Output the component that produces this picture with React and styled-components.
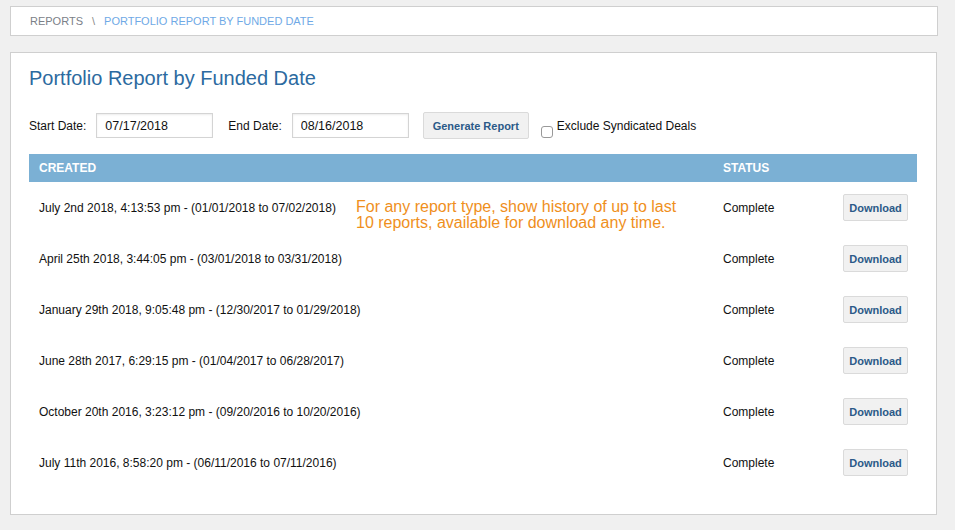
import React from "react";
import styled, { createGlobalStyle } from "styled-components";

const Global = createGlobalStyle`
  html, body { margin: 0; padding: 0; background: #f0f0f0; }
  body { font-family: "Liberation Sans", Arial, Helvetica, sans-serif; color: #222; }
  * { box-sizing: border-box; }
`;

const Page = styled.div`
  display: flex;
  flex-direction: column;
  gap: 16px;
  padding: 6px 17px 0 10px;
  width: 955px;
  height: 530px;
`;

const Crumbs = styled.nav`
  display: flex;
  align-items: center;
  gap: 9px;
  height: 30px;
  padding: 0 19px;
  background: #fff;
  border: 1px solid #cfcfcf;
  font-size: 11px;
  text-transform: uppercase;
`;

const Crumb = styled.span`
  color: ${(p) => (p.$active ? "#6fa9e6" : "#7b8088")};
`;

const Sep = styled.span`
  color: #888;
`;

const Panel = styled.section`
  position: relative;
  width: 927px;
  height: 463px;
  background: #fff;
  border: 1px solid #cfcfcf;
  padding: 12px 19px 0 18px;
`;

const Title = styled.h1`
  margin: 0;
  font-size: 20px;
  line-height: 26px;
  font-weight: normal;
  color: #2c6aa0;
`;

const Form = styled.div`
  display: flex;
  align-items: center;
  margin-top: 21px;
  height: 27px;
  font-size: 12px;
`;

const Label = styled.label`
  margin-right: 10px;
  color: #111;
`;

const DateInput = styled.input`
  width: 117px;
  height: 25px;
  padding: 0 8px;
  margin-right: ${(p) => p.$gap}px;
  border: 1px solid #d4d4d4;
  box-shadow: inset 0 1px 2px rgba(0,0,0,0.08);
  font-family: inherit;
  font-size: 12.5px;
  color: #111;
  outline: none;
`;

const Button = styled.button`
  height: ${(p) => p.$h}px;
  width: ${(p) => p.$w}px;
  padding: 0;
  background: #f1f1f1;
  border: 1px solid #dadada;
  border-radius: 2px;
  font-family: inherit;
  font-weight: bold;
  font-size: 11px;
  color: #2b5a88;
`;

const Check = styled.span`
  display: inline-block;
  width: 12px;
  height: 12px;
  margin: 13px 4px 0 12px;
  border: 1px solid #999;
  border-radius: 3px;
  background: #fff;
`;

const CheckText = styled.span`
  color: #111;
  align-self: flex-start;
  margin-top: 7px;
`;

const Table = styled.div`
  position: relative;
  margin-top: 15px;
  width: 888px;
`;

const HeadRow = styled.div`
  display: grid;
  grid-template-columns: 684px 1fr;
  align-items: center;
  height: 28px;
  background: #7bb0d4;
  color: #fff;
  font-weight: bold;
  font-size: 12px;
`;

const HeadCell = styled.div`
  padding-left: 10px;
`;

const Row = styled.div`
  display: grid;
  grid-template-columns: 684px 1fr auto;
  align-items: center;
  height: 51px;
  font-size: 12px;
  color: #111;
`;

const Cell = styled.div`
  padding-left: 10px;
`;

const ActionCell = styled.div`
  padding-right: 9px;
`;

const Note = styled.div`
  position: absolute;
  left: 327px;
  top: 45px;
  font-size: 16px;
  line-height: 16px;
  color: #ef8f1c;
`;

const rows = [
  "July 2nd 2018, 4:13:53 pm - (01/01/2018 to 07/02/2018)",
  "April 25th 2018, 3:44:05 pm - (03/01/2018 to 03/31/2018)",
  "January 29th 2018, 9:05:48 pm - (12/30/2017 to 01/29/2018)",
  "June 28th 2017, 6:29:15 pm - (01/04/2017 to 06/28/2017)",
  "October 20th 2016, 3:23:12 pm - (09/20/2016 to 10/20/2016)",
  "July 11th 2016, 8:58:20 pm - (06/11/2016 to 07/11/2016)",
];

export default function App() {
  return (
    <>
      <Global />
      <Page>
        <Crumbs>
          <Crumb>Reports</Crumb>
          <Sep>\</Sep>
          <Crumb $active>Portfolio Report by Funded Date</Crumb>
        </Crumbs>
        <Panel>
          <Title>Portfolio Report by Funded Date</Title>
          <Form>
            <Label>Start Date:</Label>
            <DateInput defaultValue="07/17/2018" $gap={15} />
            <Label>End Date:</Label>
            <DateInput defaultValue="08/16/2018" $gap={14} />
            <Button $w={106} $h={27}>Generate Report</Button>
            <Check />
            <CheckText>Exclude Syndicated Deals</CheckText>
          </Form>
          <Table>
            <HeadRow>
              <HeadCell>CREATED</HeadCell>
              <HeadCell>STATUS</HeadCell>
            </HeadRow>
            {rows.map((r) => (
              <Row key={r}>
                <Cell>{r}</Cell>
                <Cell>Complete</Cell>
                <ActionCell>
                  <Button $w={65} $h={27}>Download</Button>
                </ActionCell>
              </Row>
            ))}
            <Note>
              For any report type, show history of up to last
              <br />
              10 reports, available for download any time.
            </Note>
          </Table>
        </Panel>
      </Page>
    </>
  );
}
